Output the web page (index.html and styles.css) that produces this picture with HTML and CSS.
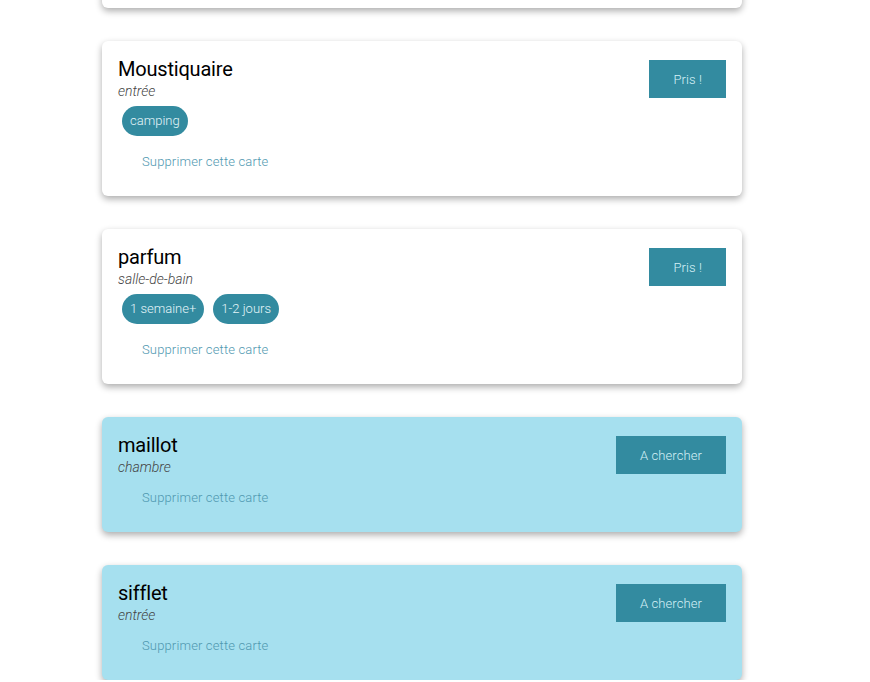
FILE: index.html
```html
<!DOCTYPE html>
<html lang="fr">
<head>
<meta charset="utf-8">
<title>Cartes</title>
<link rel="stylesheet" href="styles.css">
</head>
<body>
<main class="list">
  <article class="card card-first" aria-hidden="true"></article>

  <article class="card">
    <div class="card-head">
      <div class="card-info">
        <h2 class="card-title">Moustiquaire</h2>
        <p class="card-room">entrée</p>
      </div>
      <button class="card-btn">Pris !</button>
    </div>
    <div class="tags">
      <span class="tag">camping</span>
    </div>
    <a class="card-delete">Supprimer cette carte</a>
  </article>

  <article class="card">
    <div class="card-head">
      <div class="card-info">
        <h2 class="card-title">parfum</h2>
        <p class="card-room">salle-de-bain</p>
      </div>
      <button class="card-btn">Pris !</button>
    </div>
    <div class="tags">
      <span class="tag">1 semaine+</span>
      <span class="tag">1-2 jours</span>
    </div>
    <a class="card-delete">Supprimer cette carte</a>
  </article>

  <article class="card card-todo">
    <div class="card-head">
      <div class="card-info">
        <h2 class="card-title">maillot</h2>
        <p class="card-room">chambre</p>
      </div>
      <button class="card-btn">A chercher</button>
    </div>
    <a class="card-delete">Supprimer cette carte</a>
  </article>

  <article class="card card-todo">
    <div class="card-head">
      <div class="card-info">
        <h2 class="card-title">sifflet</h2>
        <p class="card-room">entrée</p>
      </div>
      <button class="card-btn">A chercher</button>
    </div>
    <a class="card-delete">Supprimer cette carte</a>
  </article>
</main>
</body>
</html>
```

FILE: styles.css
```css
html, body {
  margin: 0;
  padding: 0;
  background: #ffffff;
  font-family: Roboto, "Liberation Sans", sans-serif;
  overflow: hidden;
}

.list {
  display: flex;
  flex-direction: column;
  gap: 33px;
  width: 640px;
  margin-left: 102px;
}

.card {
  background: #ffffff;
  border-radius: 6px;
  box-shadow: 0 3px 7px rgba(0, 0, 0, 0.33);
  padding: 16px;
}

.card-first {
  height: 100px;
  margin-top: -92px;
  padding: 0;
}

.card-todo {
  background: #a6e0ef;
}

.card-head {
  display: flex;
  justify-content: space-between;
  align-items: flex-start;
}

.card-title {
  margin: 0;
  font-size: 20px;
  line-height: 24px;
  font-weight: 400;
  letter-spacing: -0.2px;
  color: #000000;
}

.card-room {
  margin: 0;
  font-size: 14px;
  line-height: 20px;
  font-style: italic;
  font-weight: 300;
  color: #444444;
}

.card-btn {
  margin-top: 3px;
  height: 38px;
  padding: 0 24px;
  border: none;
  border-radius: 0;
  background: #338ba0;
  color: #d6f1f7;
  font-family: Roboto, "Liberation Sans", sans-serif;
  font-size: 13px;
  font-weight: 300;
  letter-spacing: 0.1px;
}

.tags {
  display: flex;
  gap: 9px;
  margin: 5px 0 8px 4px;
}

.tag {
  height: 30px;
  line-height: 30px;
  padding: 0 8px;
  border-radius: 15px;
  background: #338ba0;
  color: #e3f5f9;
  font-size: 13px;
  font-weight: 300;
}

.card-delete {
  display: block;
  width: max-content;
  margin-top: 3px;
  padding: 8px 24px;
  font-size: 13px;
  line-height: 20px;
  font-weight: 300;
  letter-spacing: 0.15px;
  color: #4f98b0;
}
```
